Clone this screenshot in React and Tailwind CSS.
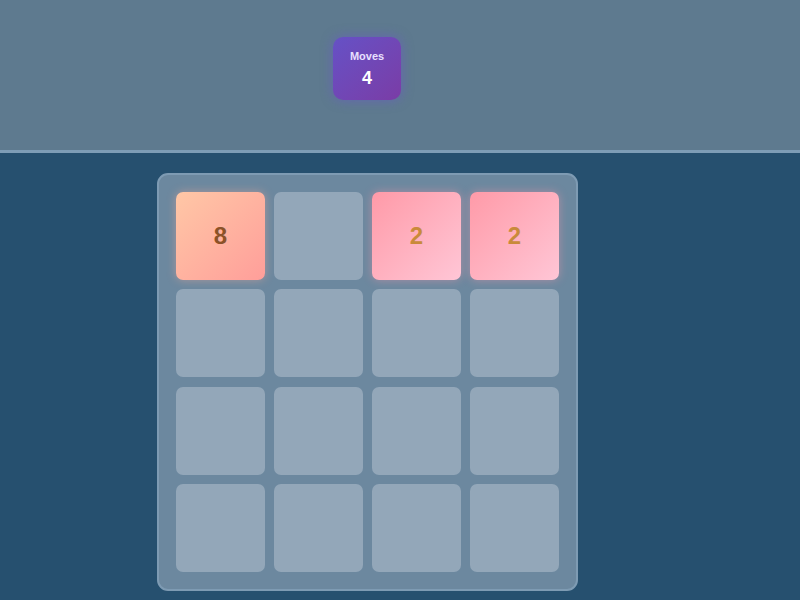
import React from 'react';

const board = [
  [8, 0, 2, 2],
  [0, 0, 0, 0],
  [0, 0, 0, 0],
  [0, 0, 0, 0],
];

const tileStyle = {
  0: 'bg-[#93a7b9]',
  2: 'bg-gradient-to-br from-[#ff9aa8] to-[#ffc6d6] text-[#c98a3a] shadow-[0_0_10px_rgba(255,150,170,0.45)]',
  8: 'bg-gradient-to-br from-[#ffc7a6] to-[#ff9e9a] text-[#8c5228] shadow-[0_0_10px_rgba(255,170,150,0.45)]',
};

const Tile = ({ value }) => (
  <div
    className={`w-[89px] h-[88px] rounded-[7px] flex items-center justify-center text-[24px] font-semibold ${tileStyle[value]}`}
  >
    {value > 0 ? value : ''}
  </div>
);

export default function App() {
  return (
    <div
      className="w-[800px] h-[600px] overflow-hidden bg-[#26506f]"
      style={{ fontFamily: '"Liberation Sans", Arial, sans-serif' }}
    >
      <header className="h-[153px] bg-[#5e7a8f] flex pl-[333px] pt-[37px] border-b-[3px] border-[#7e9db6]">
        <div className="w-[68px] h-[63px] rounded-[10px] bg-gradient-to-br from-[#6551c6] to-[#7a3ca6] shadow-[0_0_12px_rgba(110,80,220,0.5)] flex flex-col items-center pt-[14px] text-white">
          <span className="text-[11px] font-bold leading-none text-[#e8e0ff]">Moves</span>
          <span className="text-[18px] font-bold leading-none mt-[7px]">4</span>
        </div>
      </header>

      <div className="pt-[20px] pl-[157px]">
        <div className="w-[421px] h-[418px] rounded-[11px] bg-[#6c889f] border-2 border-[#7e9bb3] p-[17px] grid grid-cols-4 gap-x-[9px] gap-y-[9px]">
          {board.flat().map((v, i) => (
            <Tile key={i} value={v} />
          ))}
        </div>
      </div>
    </div>
  );
}
